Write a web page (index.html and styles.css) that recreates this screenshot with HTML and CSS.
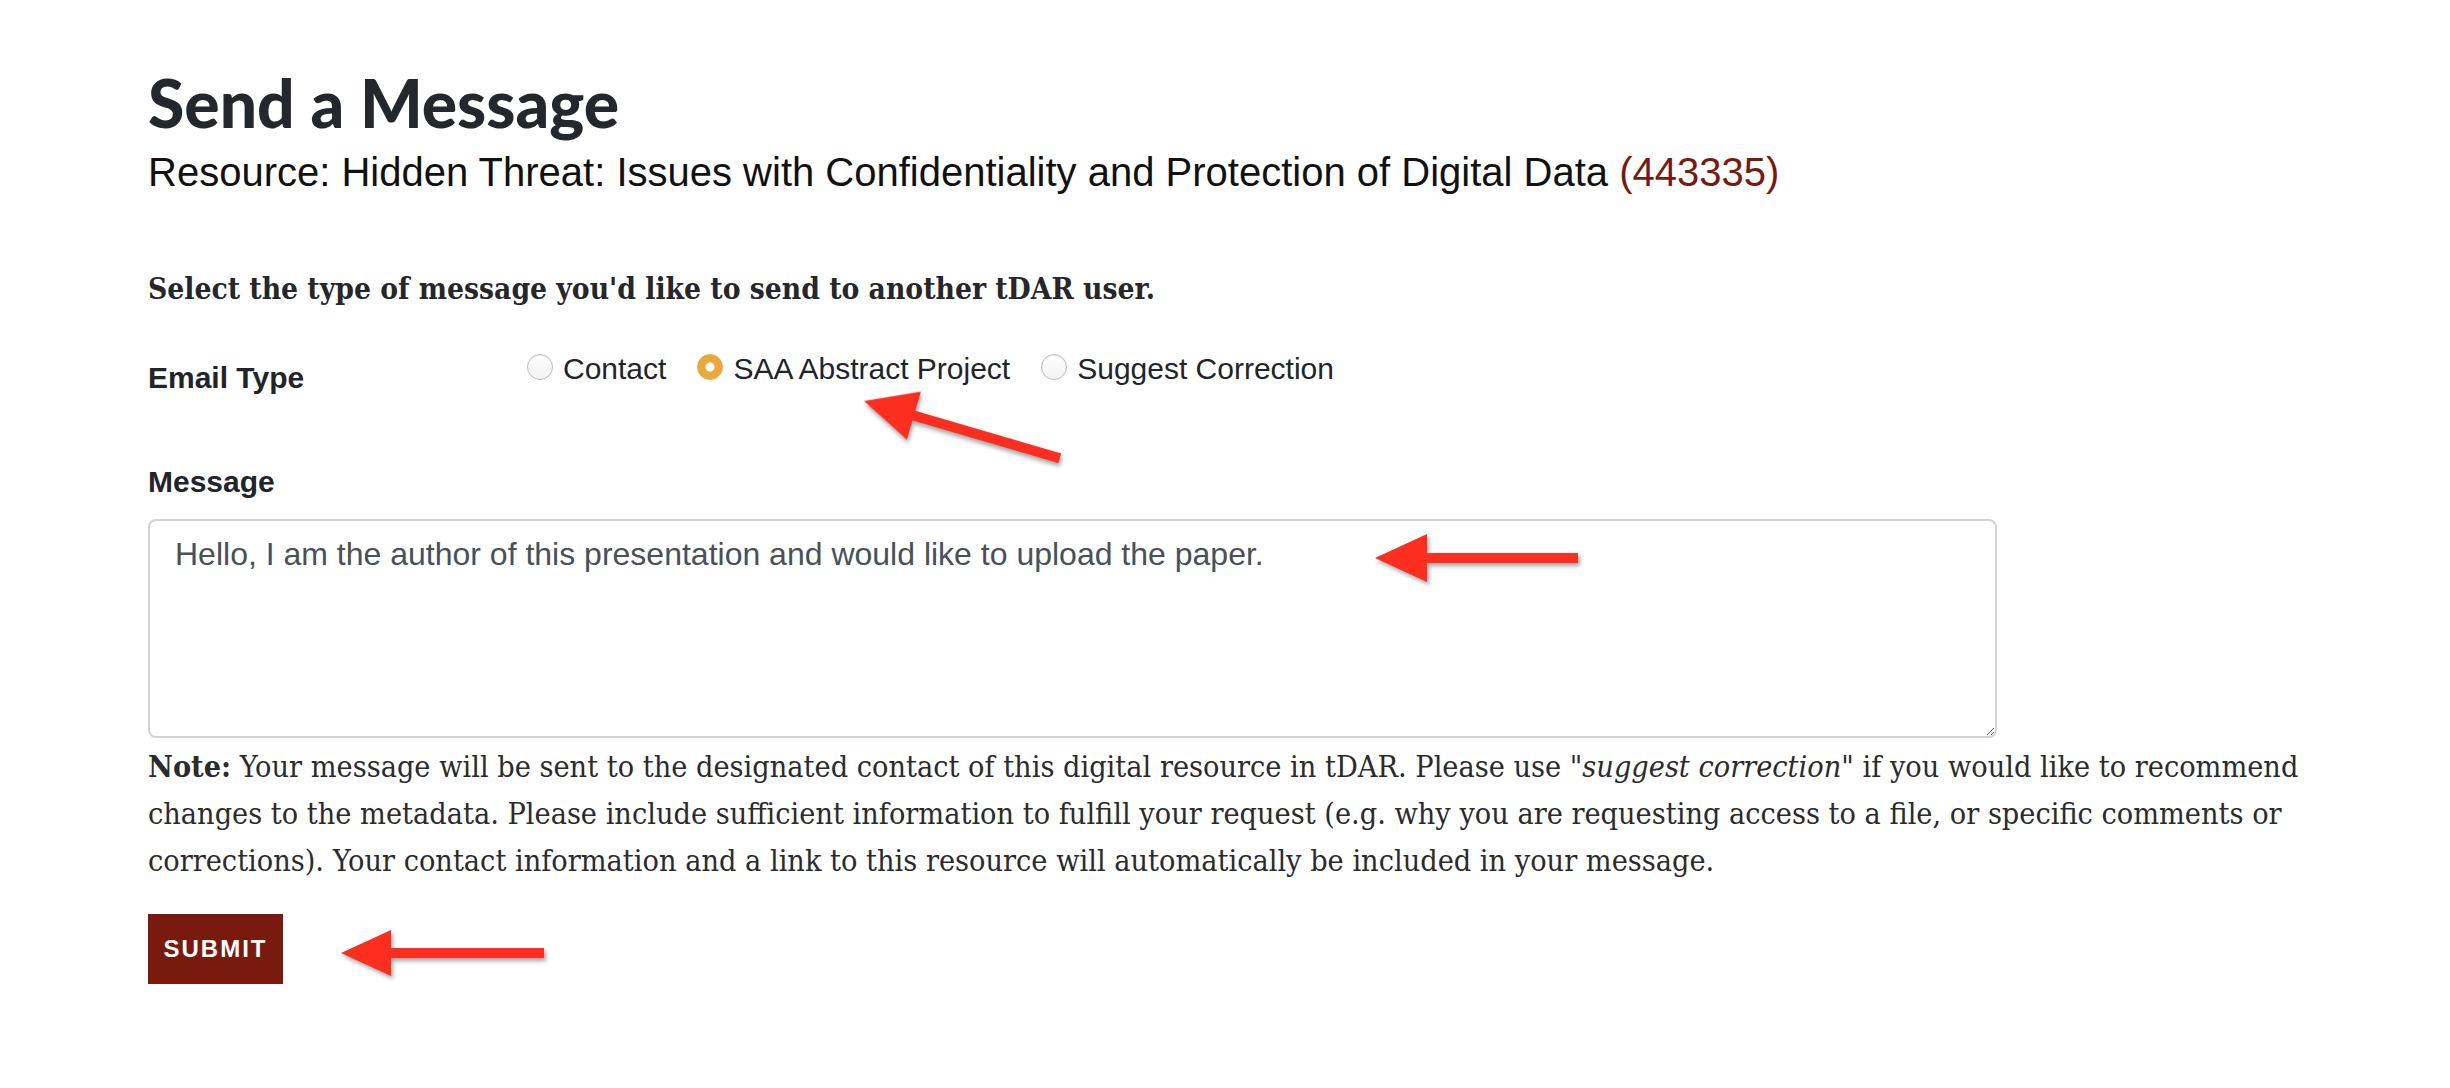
FILE: index.html
```html
<!DOCTYPE html>
<html lang="en">
<head>
  <meta charset="UTF-8">
  <title>Send a Message</title>
  <link rel="stylesheet" href="styles.css">
</head>
<body>
  <div class="page">
    <h1 class="title">Send a Message</h1>
    <div class="resource">Resource: Hidden Threat: Issues with Confidentiality and Protection of Digital Data <span class="resource-id">(443335)</span></div>

    <form class="message-form">
      <h2 class="form-intro">Select the type of message you'd like to send to another tDAR user.</h2>

      <div class="form-row">
        <label class="row-label">Email Type</label>
        <div class="radio-group">
          <label class="radio"><input type="radio" name="type"> Contact</label>
          <label class="radio"><input type="radio" name="type" checked> SAA Abstract Project</label>
          <label class="radio"><input type="radio" name="type"> Suggest Correction</label>
        </div>
      </div>

      <label class="field-label" for="message">Message</label>
      <textarea id="message" class="message-box">Hello, I am the author of this presentation and would like to upload the paper.</textarea>

      <p class="note"><b>Note:</b> Your message will be sent to the designated contact of this digital resource in tDAR. Please use "<i>suggest correction</i>" if you would like to recommend changes to the metadata. Please include sufficient information to fulfill your request (e.g. why you are requesting access to a file, or specific comments or corrections). Your contact information and a link to this resource will automatically be included in your message.</p>

      <button type="button" class="btn-submit">SUBMIT</button>
    </form>
  </div>

  <!-- annotation arrows drawn over the screenshot -->
  <svg class="annotations" width="2450" height="1088" viewBox="0 0 2450 1088">
    <g class="arrow" transform="translate(864 401) rotate(16.3)">
      <polygon points="0,0 52,-25 52,-5 204,-5 204,5 52,5 52,25"/>
    </g>
    <g class="arrow" transform="translate(1375 558)">
      <polygon points="0,0 52,-24 52,-5 203,-5 203,5 52,5 52,24"/>
    </g>
    <g class="arrow" transform="translate(341 953)">
      <polygon points="0,0 50,-23 50,-5 203,-5 203,5 50,5 50,23"/>
    </g>
  </svg>
</body>
</html>
```

FILE: styles.css
```css
:root {
  --text-dark: #212529;
  --text-input: #495057;
  --brand-red: #791a0e;
  --radio-orange: #eba83e;
  --border-light: #ced4da;
  --arrow-red: #fb2e1f;
  --sans: "Liberation Sans", Arial, sans-serif;
  --slab: "DejaVu Serif Condensed", "DejaVu Serif", serif;
}

* {
  box-sizing: border-box;
  margin: 0;
  padding: 0;
}

body {
  position: relative;
  width: 2450px;
  height: 1088px;
  overflow: hidden;
  background: #ffffff;
  color: var(--text-dark);
  font-family: var(--sans);
}

.page {
  padding: 67px 122px 0 148px;
}

.title {
  font-family: Lato, var(--sans);
  font-weight: 900;
  font-size: 66px;
  line-height: 71px;
  color: #24272b;
}

.resource {
  margin-top: 10px;
  font-size: 40px;
  line-height: 48px;
  color: #111111;
}

.resource-id {
  color: var(--brand-red);
}

.form-intro {
  margin-top: 73px;
  font-family: var(--slab);
  font-stretch: condensed;
  font-weight: bold;
  font-size: 29.7px;
  line-height: 40px;
  color: #25272b;
}

.form-row {
  display: grid;
  grid-template-columns: 379px 1fr;
  margin-top: 32px;
  font-size: 30px;
  line-height: 36px;
}

.row-label {
  padding-top: 19px;
  font-weight: bold;
}

.radio-group {
  display: flex;
  gap: 31px;
}

.radio {
  display: inline-flex;
  align-items: center;
  gap: 10px;
}

.radio input {
  appearance: none;
  -webkit-appearance: none;
  width: 26px;
  height: 26px;
  margin-top: -4px;
  border-radius: 50%;
  border: 1.5px solid #bdbdbd;
  background: linear-gradient(#ffffff, #f2f2f2);
  box-shadow: inset 0 1px 1px rgba(0, 0, 0, 0.08);
}

.radio input:checked {
  border-color: var(--radio-orange);
  background: radial-gradient(circle, #ffffff 0 4px, var(--radio-orange) 5px);
  box-shadow: none;
}

.field-label {
  display: block;
  margin-top: 68px;
  font-size: 30px;
  line-height: 36px;
  font-weight: bold;
}

.message-box {
  display: block;
  width: 1849px;
  height: 219px;
  margin-top: 19px;
  padding: 11px 25px;
  border: 2px solid var(--border-light);
  border-radius: 8px;
  font-family: var(--sans);
  font-size: 32px;
  line-height: 45px;
  color: var(--text-input);
  resize: vertical;
}

.note {
  margin-top: 5px;
  font-family: var(--slab);
  font-stretch: condensed;
  font-size: 30.3px;
  line-height: 47px;
  color: #2b2b2b;
}

.btn-submit {
  display: block;
  width: 135px;
  height: 70px;
  margin-top: 30px;
  border: none;
  background: var(--brand-red);
  color: #ffffff;
  font-family: var(--sans);
  font-weight: bold;
  font-size: 24px;
  letter-spacing: 2px;
}

.annotations {
  position: absolute;
  top: 0;
  left: 0;
  pointer-events: none;
}

.arrow polygon {
  fill: var(--arrow-red);
  filter: drop-shadow(2px 3px 2px rgba(0, 0, 0, 0.35));
}
```
